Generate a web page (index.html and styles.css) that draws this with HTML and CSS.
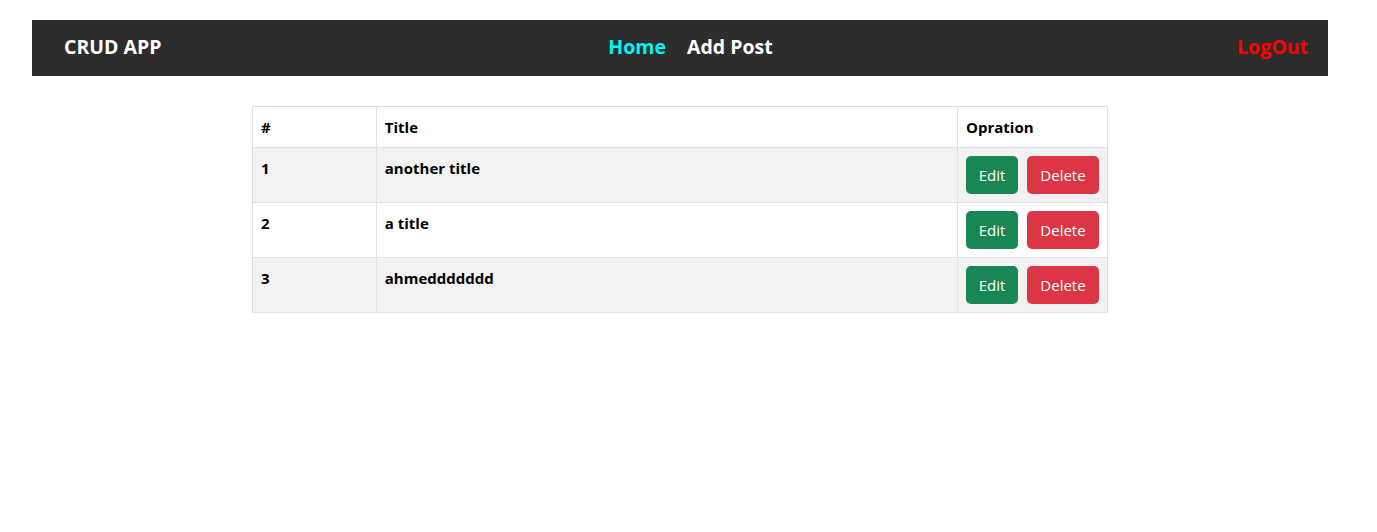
FILE: index.html
```html
<!DOCTYPE html>
<html>
<head>
<meta charset="utf-8">
<link rel="stylesheet" href="styles.css">
</head>
<body>
<div class="page">
  <nav class="navbar">
    <div class="brand">CRUD APP</div>
    <div class="links">
      <a class="link active">Home</a>
      <a class="link">Add Post</a>
    </div>
    <div class="right"><a class="logout">LogOut</a></div>
  </nav>
  <table class="posts">
    <colgroup>
      <col class="c1"><col class="c2"><col class="c3">
    </colgroup>
    <thead>
      <tr><th>#</th><th>Title</th><th>Opration</th></tr>
    </thead>
    <tbody>
      <tr class="odd"><td>1</td><td>another title</td><td><div class="ops"><button class="btn edit">Edit</button><button class="btn del">Delete</button></div></td></tr>
      <tr><td>2</td><td>a title</td><td><div class="ops"><button class="btn edit">Edit</button><button class="btn del">Delete</button></div></td></tr>
      <tr class="odd"><td>3</td><td>ahmeddddddd</td><td><div class="ops"><button class="btn edit">Edit</button><button class="btn del">Delete</button></div></td></tr>
    </tbody>
  </table>
</div>
</body>
</html>
```
FILE: styles.css
```css
html, body {
  margin: 0;
  padding: 0;
  background: #fff;
}
body {
  font-family: "Open Sans", "Noto Sans", sans-serif;
  color: #000;
}
.page {
  width: 1360px;
  padding-top: 20px;
}
.navbar {
  margin: 0 32px;
  height: 56px;
  background: #2d2d2d;
  display: flex;
  align-items: center;
  padding: 0 20px 4px 32px;
  box-sizing: border-box;
  font-weight: 700;
  font-size: 19.5px;
}
.brand {
  flex: 1;
  color: #fff;
}
.links {
  display: flex;
  gap: 21px;
  margin-left: 9px;
}
.link {
  color: #fff;
}
.link.active {
  color: #00f5f5;
}
.right {
  flex: 1;
  text-align: right;
}
.logout {
  color: #ff0000;
}
.posts {
  width: 856px;
  margin: 30px auto 0;
  border-collapse: collapse;
  font-size: 15px;
  font-weight: 700;
}
.c1 { width: 124px; }
.c2 { width: 582px; }
.c3 { width: 150px; }
.posts th, .posts td {
  border: 1px solid #dee2e6;
  padding: 8px;
  text-align: left;
  vertical-align: top;
  line-height: 24px;
}
.posts tr.odd td {
  background: #f2f2f2;
}
.ops {
  display: flex;
  gap: 9px;
}
.btn {
  flex: none;
  font-family: inherit;
  font-size: 15px;
  font-weight: 400;
  color: #fff;
  border: none;
  border-radius: 5px;
  height: 38px;
  padding: 0;
  line-height: 38px;
  cursor: pointer;
}
.edit {
  background: #198754;
  width: 52px;
}
.del {
  background: #dc3545;
  width: 72px;
}
```
